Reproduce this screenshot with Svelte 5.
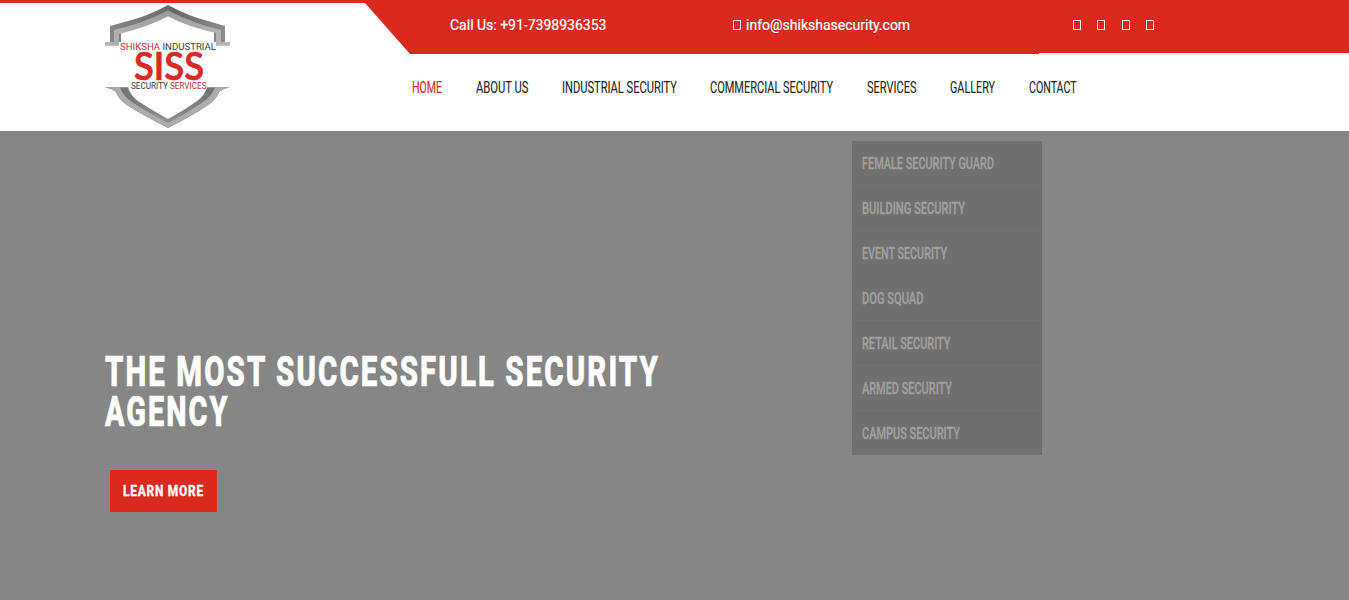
<script>
  const nav = [
    ['HOME', 412, 30], ['ABOUT US', 476, 52.5], ['INDUSTRIAL SECURITY', 562, 115],
    ['COMMERCIAL SECURITY', 710, 123], ['SERVICES', 867, 49.5], ['GALLERY', 950, 45], ['CONTACT', 1028.5, 47.5]
  ].map(([label, start, width], i, all) => ({
    label, width, gap: i ? start - all[i - 1][1] - all[i - 1][2] : 0
  }));
  const services = [
    ['FEMALE SECURITY GUARD', 132], ['BUILDING SECURITY', 103], ['EVENT SECURITY', 85],
    ['DOG SQUAD', 61.5], ['RETAIL SECURITY', 88.5], ['ARMED SECURITY', 90], ['CAMPUS SECURITY', 98]
  ];
</script>

{#snippet condensed(text, width, height, baseline)}
  <svg {width} {height} class="condensed">
    <text x="0" y={baseline} textLength={width} lengthAdjust="spacingAndGlyphs">{text}</text>
  </svg>
{/snippet}

<div class="page">
  <header>
    <div class="left">
      <svg class="logo" width="127" height="126" viewBox="0 0 127 126">
        <defs>
          <linearGradient id="top" x1="0" x2="1"><stop offset="0" stop-color="#858585" /><stop offset=".48" stop-color="#6d6d6d" /><stop offset=".55" stop-color="#656565" /><stop offset="1" stop-color="#8c8c8c" /></linearGradient>
          <linearGradient id="light" x1="0" x2="1"><stop offset="0" stop-color="#b4b4b4" /><stop offset=".5" stop-color="#9c9c9c" /><stop offset="1" stop-color="#b8b8b8" /></linearGradient>
          <linearGradient id="bottom" x1="0" x2="1"><stop offset="0" stop-color="#666" /><stop offset=".5" stop-color="#929292" /><stop offset="1" stop-color="#666" /></linearGradient>
        </defs>
        <path d="M6 38V22L24 17Q44 12 64 1Q84 12 104 17L121 22V38H110V27Q82 22 64 12Q46 22 17 28V38Z" fill="url(#top)" />
        <path d="M1 41.700V38H10V26Q40 19 64 6.500Q88 19 117 26V38H126V41.700H112V29Q84 23 64 12Q44 23 15 30V41.700Z" fill="url(#light)" />
        <path d="M1 83.200H24Q26 91 34 97Q46 105 64 115Q82 105 93 97Q101 91 103 83.200H126Q118 85 115 88Q112 96 104 101Q88 112 64 124Q40 112 23 101Q15 96 12 88Q9 85 1 83.200Z" fill="url(#bottom)" />
        <path d="M1 83.200H16Q19 92 28 98Q43 108 64 119Q85 108 99 98Q108 92 111 83.200H126Q118 85 115 88Q112 96 104 101Q88 112 64 124Q40 112 23 101Q15 96 12 88Q9 85 1 83.200Z" fill="#acacac" />
        <g class="logo-small">
          <text x="16" y="45.500" textLength="96" lengthAdjust="spacingAndGlyphs" xml:space="preserve"><tspan fill="#c4302d">SHIKSHA&nbsp;</tspan><tspan fill="#343b42">INDUSTRIAL</tspan></text>
          <text x="27" y="84.500" textLength="75.500" lengthAdjust="spacingAndGlyphs" xml:space="preserve"><tspan fill="#343b42">SECURITY&nbsp;</tspan><tspan fill="#c4302d">SERVICES</tspan></text>
        </g>
        <text class="siss" x="30" y="76" textLength="70" lengthAdjust="spacingAndGlyphs">SISS</text>
      </svg>
    </div>
    <div class="right">
      <div class="topbar">
        <span class="phone">Call Us: +91-7398936353</span>
        <span class="mail"><i class="box"></i>info@shikshasecurity.com</span>
        <span class="social"><i class="box"></i><i class="box"></i><i class="box"></i><i class="box"></i></span>
      </div>
      <nav>
        {#each nav as item, i}
          <a class:active={i === 0} style:margin-left="{item.gap}px">{@render condensed(item.label, item.width, 20, 15)}</a>
        {/each}
      </nav>
    </div>
  </header>
  <main>
    <section class="intro">
      <h1>
        {@render condensed('THE MOST SUCCESSFULL SECURITY', 555, 40, 35)}
        {@render condensed('AGENCY', 124.5, 40, 35)}
      </h1>
      <button>{@render condensed('LEARN MORE', 81, 20, 15)}</button>
    </section>
    <ul class="dropdown">
      {#each services as [label, width]}
        <li>{@render condensed(label, width, 20, 16)}</li>
      {/each}
    </ul>
  </main>
</div>

<style>
  :global(body) { margin: 0; overflow: hidden; }
  .page { width: 1349px; height: 600px; font-family: Roboto, sans-serif; background: #fff; }
  header { display: flex; height: 128px; border-top: 3px solid #da2a20; background: #fff; }
  .left { width: 365px; flex: none; box-sizing: border-box; padding: 1px 0 0 104px; }
  .logo { display: block; }
  .logo-small { font: 400 8.5px Roboto, sans-serif; }
  .siss { font: 600 38px Lato, sans-serif; fill: #d82925; stroke: #d82925; stroke-width: .7; }
  .right { flex: 1; }
  .topbar { display: flex; align-items: flex-start; height: 51px; box-sizing: border-box; padding: 12px 0 0 85px; background: #da2a20; color: #fff; font-size: 14px; line-height: 21px; -webkit-text-stroke: .2px #fff; clip-path: polygon(0 0, 100% 0, 100% 50px, 674px 50px, 674px 51px, 45px 51px); }
  .phone { width: 283px; }
  .mail { display: flex; width: 340px; }
  .box { display: block; width: 8px; height: 10px; box-sizing: border-box; border: 1px solid #fff; margin-top: 5px; }
  .mail .box { margin-right: 5px; }
  .social { display: flex; gap: 16.400px; }
  nav { display: flex; padding: 24px 0 0 47px; }
  .condensed { display: block; overflow: visible; fill: currentColor; stroke: currentColor; stroke-width: .1px; }
  nav a { color: #222; font-size: 16px; }
  nav a.active { color: #da2a20; }
  main { display: flex; height: 469px; background: #868686; }
  .intro { width: 852px; box-sizing: border-box; padding: 220px 0 0 105px; }
  h1 { margin: 0; color: #fff; font-size: 42px; font-weight: 800; letter-spacing: 3px; }
  h1 .condensed { stroke-width: .7px; }
  button { display: block; width: 107px; height: 42px; margin: 39px 0 0 5px; padding: 0 0 0 12.500px; border: 0; background: #da2a20; color: #fff; font: 800 15.500px Roboto, sans-serif; letter-spacing: 1px; }
  button .condensed { stroke-width: .3px; }
  .dropdown { width: 190px; height: 314px; box-sizing: border-box; margin: 10px 0 0; padding: 0; list-style: none; background: #707070; color: #a0a0a0; font-size: 16px; font-weight: 500; }
  .dropdown .condensed { stroke-width: .3px; }
  li { height: 45px; box-sizing: border-box; padding: 12px 10px; border-bottom: 1px solid #747474; }
  li:last-child { border: 0; height: 44px; }
</style>
